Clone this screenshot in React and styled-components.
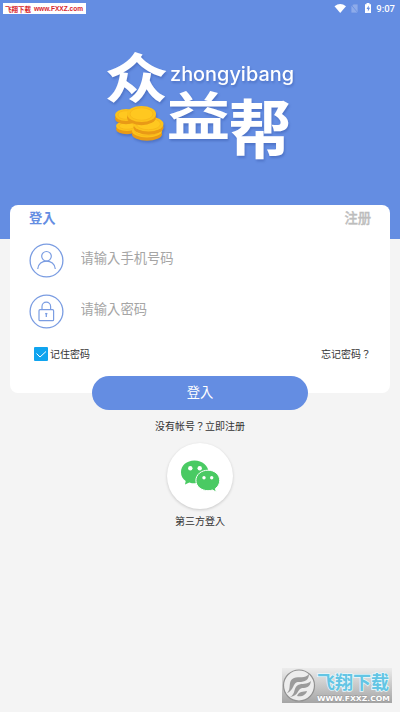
import React from 'react';
import styled, { createGlobalStyle } from 'styled-components';

const GlobalStyle = createGlobalStyle`
  * {
    box-sizing: border-box;
  }

  body {
    margin: 0;
    background: #f4f4f4;
    font-family: 'Noto Sans CJK TC', 'Noto Sans CJK SC', sans-serif;
    color: #333;
  }

  button,
  input {
    font-family: inherit;
  }
`;

const Screen = styled.div`
  position: relative;
  width: 100%;
  height: 712px;
  overflow: hidden;
  background: #f4f4f4;
`;

const Header = styled.header`
  height: 239px;
  background: #648de2;
`;

const StatusBar = styled.div`
  display: flex;
  justify-content: space-between;
  height: 16px;
  padding: 3px 5px 0 3px;
`;

const SiteTag = styled.div`
  width: 83px;
  height: 11px;
  background: #fff;

  svg {
    display: block;
    font-size: 7px;
    font-weight: 700;
  }
`;

const StatusIcons = styled.div`
  display: flex;
  align-items: center;
  height: 11px;
  color: #fff;
  font: 500 9.5px/11px Roboto, sans-serif;
`;

const Logo = styled.svg`
  display: block;
  width: 200px;
  height: 130px;
  margin: 24px auto 0;
  overflow: visible;
  filter: drop-shadow(1px 2px 1px rgba(40, 70, 150, 0.35));
`;

const Card = styled.form`
  height: 188px;
  margin: -34px 10px 0;
  padding: 3px 19px 0;
  border-radius: 8px;
  background: #fff;
`;

const Tabs = styled.div`
  display: flex;
  justify-content: space-between;
  height: 20px;
`;

const Tab = styled.button`
  padding: 0;
  border: 0;
  background: none;
  color: ${({ $active }) => ($active ? '#648de2' : '#bdbdbd')};
  font-size: 13.3px;
  font-weight: ${({ $active }) => ($active ? 700 : 500)};
  line-height: 20px;
  -webkit-text-stroke: ${({ $active }) => ($active ? 0 : '0.35px')};
`;

const Field = styled.label`
  display: flex;
  align-items: center;
  gap: 17px;
  height: 34px;
  margin-top: ${({ $top }) => $top}px;

  svg {
    flex: none;
    margin-left: -0.5px;
  }

  input {
    width: 200px;
    height: 24px;
    margin-top: -6px;
    padding: 0;
    border: 0;
    outline: none;
    background: none;
    font-size: 13.3px;
  }

  input::placeholder {
    color: #a5a5a5;
    opacity: 1;
  }
`;

const Options = styled.div`
  display: flex;
  justify-content: space-between;
  align-items: center;
  height: 14px;
  margin-top: 18px;
  padding-left: 5px;
  font-size: 10px;
  line-height: 14px;
`;

const Remember = styled.div`
  display: flex;
  align-items: center;
  gap: 2px;
`;

const CheckBox = styled.span`
  display: block;
  width: 14px;
  height: 14px;
  border-radius: 1px;
  background: #10a4ef;

  svg {
    display: block;
  }
`;

const Submit = styled.button`
  position: relative;
  display: block;
  width: 216px;
  height: 34px;
  margin: -17px auto 0;
  padding: 0 0 3px;
  border: 0;
  border-radius: 17px;
  background: #648de2;
  color: #fff;
  font-size: 13.3px;
  line-height: 31px;
`;

const Caption = styled.p`
  height: 14px;
  margin: ${({ $top }) => $top}px 0 0;
  font-size: 10px;
  line-height: 14px;
  text-align: center;
`;

const WechatButton = styled.button`
  display: block;
  width: 66px;
  height: 66px;
  margin: 10px auto 0;
  padding: 0;
  border: 0;
  border-radius: 50%;
  background: #fff;
  box-shadow: 0 1px 3px rgba(0, 0, 0, 0.18);

  svg {
    display: block;
  }
`;

const Watermark = styled.div`
  position: absolute;
  right: 8px;
  bottom: 9px;
  display: flex;
  align-items: center;
  width: 110px;
  height: 35px;
  background: linear-gradient(#ececec, #a5a5a5);
`;

const WatermarkText = styled.svg`
  display: block;
  width: 76px;
  height: 35px;
  font-weight: 700;
`;

const Coin = ({ x, y, rx, ry }) => (
  <g>
    <ellipse cx={x} cy={y + 3.2} rx={rx} ry={ry} fill="#e99a16" />
    <ellipse cx={x} cy={y} rx={rx} ry={ry} fill="#fcc21b" />
    <ellipse
      cx={x}
      cy={y}
      rx={rx - 3}
      ry={ry - 1.8}
      fill="#ffc820"
      stroke="#f3ad18"
      strokeWidth="0.5"
    />
  </g>
);

const BrandLogo = () => (
  <Logo viewBox="100 40 200 130">
    <g fill="#fff" fontFamily="'Noto Sans CJK SC', sans-serif" fontWeight="700">
      <text transform="translate(104.5 98) scale(1.14 0.96)" fontSize="56">
        众
      </text>
      <text transform="translate(166.5 136) scale(1.14 0.94)" fontSize="56">
        益
      </text>
      <text transform="translate(228.5 153) scale(1.12 1.14)" fontSize="56">
        帮
      </text>
    </g>
    <text
      x="170"
      y="80.5"
      fill="#fff"
      fontFamily="Inter, sans-serif"
      fontSize="19.5"
      fontWeight="500"
      textLength="124"
      lengthAdjust="spacingAndGlyphs"
    >
      zhongyibang
    </text>
    <Coin x={127} y={126} rx={11} ry={5} />
    <Coin x={126} y={115} rx={11} ry={6} />
    <Coin x={147} y={131} rx={15} ry={6.5} />
    <Coin x={148.5} y={124} rx={15} ry={7.5} />
    <Coin x={141.5} y={114} rx={14.5} ry={8} />
  </Logo>
);

const UserIcon = () => (
  <svg width="35" height="35" viewBox="0 0 35 35" fill="none" stroke="#7b9de2">
    <circle cx="17.5" cy="17.5" r="16.4" strokeWidth="1.3" />
    <circle cx="17.5" cy="13.3" r="4.8" strokeWidth="1.2" />
    <path d="M8.7 26C9.4 15.4 25.6 15.4 26.3 26" strokeWidth="1.2" />
  </svg>
);

const LockIcon = () => (
  <svg width="35" height="35" viewBox="0 0 35 35" fill="none" stroke="#7b9de2">
    <circle cx="17.5" cy="17.5" r="16.4" strokeWidth="1.3" />
    <rect x="10" y="15.7" width="14.6" height="11" rx="1" strokeWidth="1.2" />
    <path d="M13 15.5V12.5a4.3 4.3 0 0 1 8.6 0V15.5" strokeWidth="1.2" />
    <path d="M17.3 19.2V23" strokeWidth="1.3" />
    <path d="M16.2 19.6H18.4" strokeWidth="1.3" />
  </svg>
);

const WechatIcon = () => (
  <svg width="66" height="66" viewBox="0 0 66 66">
    <path
      d="M27.5 17.5C19.7 17.5 14 22.6 14 29.2c0 3.7 1.7 6.7 4.7 8.8l-.7 3.6 4.3-2.2c1.7.6 3.4.9 5.2.9 7.8 0 14-4.9 14-11.2S35.300 17.500 27.500 17.500z"
      fill="#4aca63"
    />
    <path
      d="M41 27.200C34.400 27.200 28.900 31.500 28.900 37.400S34.400 47.700 41 47.700c1.600 0 3.100-.2 4.500-.7l3.800 2.100-.9-3.600c2.800-1.900 4.300-4.700 4.300-8.100C52.700 31.500 47.600 27.200 41 27.200z"
      fill="#4aca63"
      stroke="#fff"
    />
    <g fill="#fff">
      <circle cx="23.3" cy="25.3" r="2.2" />
      <circle cx="32.7" cy="25.3" r="2.2" />
      <circle cx="37" cy="34.7" r="1.7" />
      <circle cx="44.7" cy="34.7" r="1.7" />
    </g>
  </svg>
);

const PhoenixMark = () => (
  <svg width="34" height="35" viewBox="0 0 34 35">
    <circle cx="17" cy="17.5" r="15.5" fill="#ededed" stroke="#929292" strokeWidth="1.2" />
    <path
      d="M5 25C10 21 5 13 12 10c5-2 11 1 15-4 0 6-4 8-10 8-7 0-4 8-12 11z"
      fill="#9b9b9b"
    />
    <path
      d="M8 29c6-3 3-9 8-12 4-2 9 0 13-4-1 6-4 7-9 7-5 1-3 8-12 9z"
      fill="#9b9b9b"
    />
    <path d="M15 28c2-5 6-4 10-5-1 4-5 6-10 5z" fill="#9b9b9b" />
  </svg>
);

const App = () => {
  return (
    <>
      <GlobalStyle />
      <Screen>
        <Header>
          <StatusBar>
            <SiteTag>
              <svg width="83" height="11" fill="#d8262c">
                <text x="2" y="8.5" textLength="26" lengthAdjust="spacingAndGlyphs">
                  飞翔下载
                </text>
                <text
                  x="31"
                  y="8.3"
                  fontFamily="'Liberation Sans', sans-serif"
                  textLength="49"
                  lengthAdjust="spacingAndGlyphs"
                >
                  www.FXXZ.com
                </text>
              </svg>
            </SiteTag>
            <StatusIcons>
              <svg width="42" height="11" viewBox="334 3 42 11">
                <path d="M334.5 6.2Q340.2 1.8 346 6.2L340.2 13z" fill="#fff" />
                <path
                  d="M353.5 4H358V13H351V6.5zM350.5 4L358 13"
                  fill="#8eabea"
                  stroke="#648de2"
                  strokeWidth="0.8"
                />
                <path d="M365 4.2h1.5V3h3v1.2h1.5V13h-6z" fill="#fff" />
                <path d="M368.7 5.5l-2.2 3.5h1.4v2.5l2.2-3.7h-1.4z" fill="#648de2" />
              </svg>
              <span>9:07</span>
            </StatusIcons>
          </StatusBar>
          <BrandLogo />
        </Header>

        <Card>
          <Tabs>
            <Tab type="button" $active>
              登入
            </Tab>
            <Tab type="button">注册</Tab>
          </Tabs>
          <Field $top={15}>
            <UserIcon />
            <input type="text" placeholder="请输入手机号码" />
          </Field>
          <Field $top={17.5}>
            <LockIcon />
            <input type="password" placeholder="请输入密码" />
          </Field>
          <Options>
            <Remember>
              <CheckBox>
                <svg width="14" height="14" fill="none" stroke="#fff">
                  <path d="M2.5 6.5L6 10L12 4.5" />
                </svg>
              </CheckBox>
              <span>记住密码</span>
            </Remember>
            <span>忘记密码？</span>
          </Options>
        </Card>

        <Submit type="button">登入</Submit>
        <Caption $top={9}>没有帐号？立即注册</Caption>
        <WechatButton type="button">
          <WechatIcon />
        </WechatButton>
        <Caption $top={5}>第三方登入</Caption>

        <Watermark>
          <PhoenixMark />
          <WatermarkText>
            <text
              x="1"
              y="21"
              fill="#63c5e4"
              stroke="#e9f7fb"
              strokeWidth="1.5"
              paintOrder="stroke"
              fontSize="18"
              textLength="72"
              lengthAdjust="spacingAndGlyphs"
            >
              飞翔下载
            </text>
            <text
              x="1"
              y="33"
              fill="#fff"
              stroke="#999"
              strokeWidth="0.8"
              paintOrder="stroke"
              fontFamily="'DejaVu Sans', sans-serif"
              fontSize="7"
              textLength="73"
              lengthAdjust="spacingAndGlyphs"
            >
              WWW.FXXZ.COM
            </text>
          </WatermarkText>
        </Watermark>
      </Screen>
    </>
  );
};

export default App;
